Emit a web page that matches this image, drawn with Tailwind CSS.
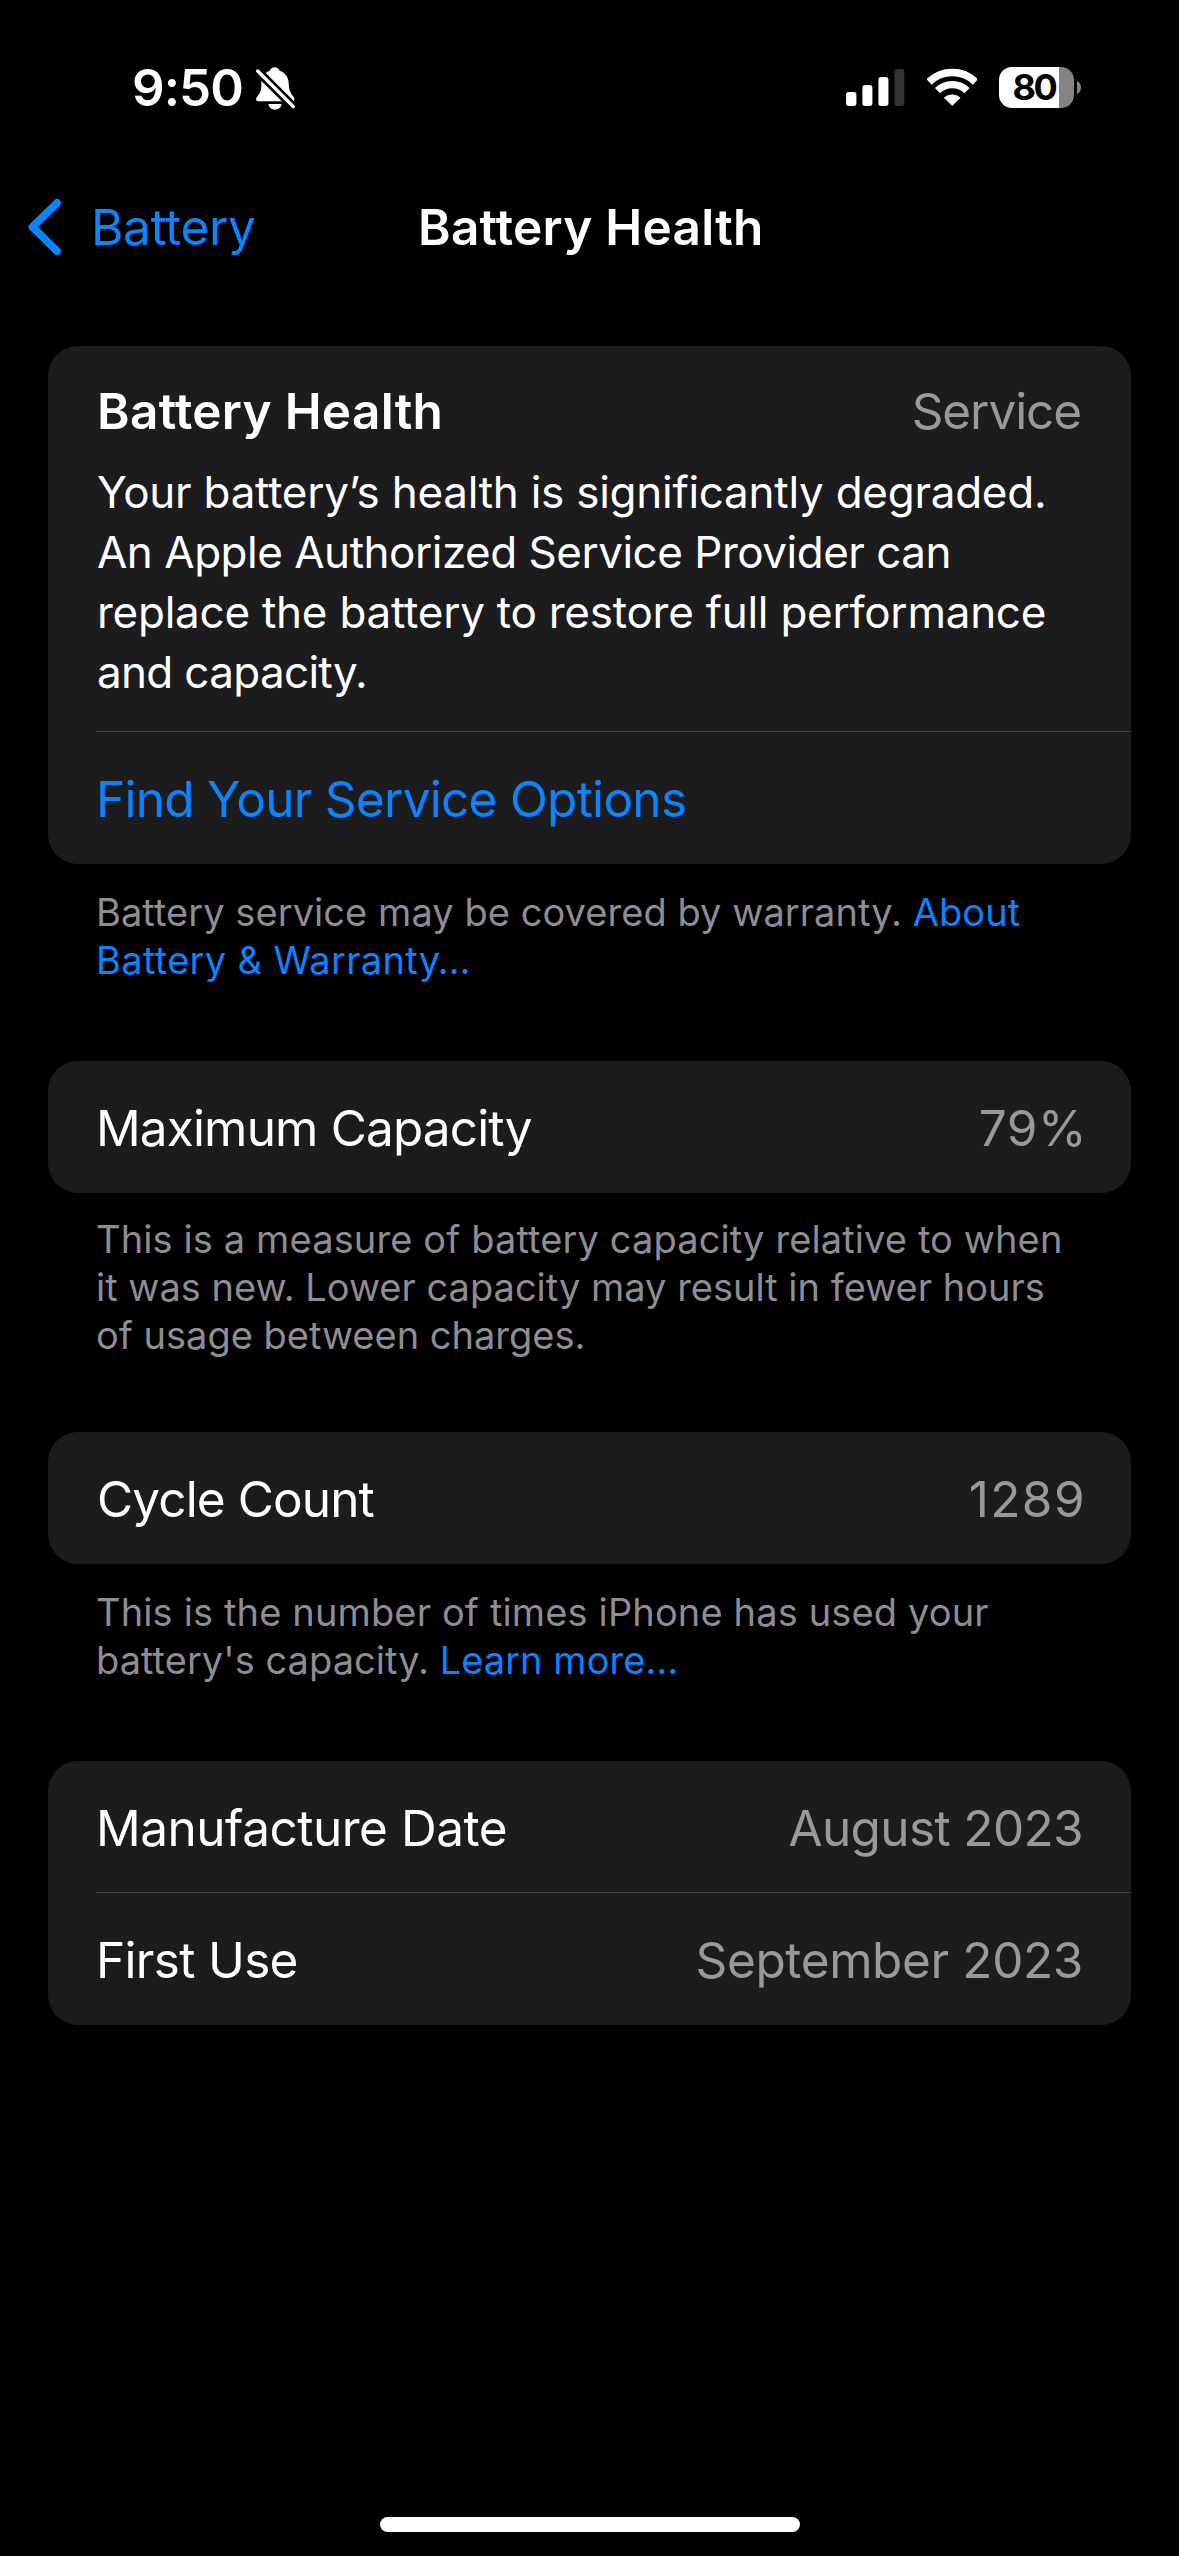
<!DOCTYPE html>
<html lang="en">
<head>
    <meta charset="UTF-8">
    <meta name="viewport" content="width=device-width, initial-scale=1.0">
    <title>Battery Health</title>
    <script src="https://cdn.jsdelivr.net/npm/@tailwindcss/browser@4"></script>
</head>
<body class="bg-black">
    <div class="w-[1179px] h-[2556px] flex flex-col overflow-hidden bg-black text-white font-['Inter',sans-serif] whitespace-nowrap">

        <!-- Status bar -->
        <div class="h-[161px] shrink-0 flex items-start justify-between pt-[67px] pl-[132px] pr-[98px]">
            <div class="flex items-start">
                <span class="w-[123px] text-[51px] leading-[42px] font-semibold tracking-[-0.9px]">9:50</span>
                <svg class="w-[41px] h-[43px]" viewBox="465 80 123 129" fill="none">
                    <path d="M524 81C531 81 537 85 539 91C556 97 565 110 566 127C567 149 571 157 579 167C583 172 584 176 583 179Q582 183 576 183H475Q468 183 468 177Q468 172 473 167C481 157 484 150 484 134C484 111 492 97 509 91C511 85 517 81 524 81Z" fill="white"/>
                    <path d="M505 191H545C543 202 535 208 525 208C515 208 507 202 505 191Z" fill="white"/>
                    <path d="M468 87L588 207" stroke="black" stroke-width="26"/>
                    <path d="M473 92L580 199" stroke="white" stroke-width="10" stroke-linecap="round"/>
                </svg>
            </div>
            <div class="flex items-start">
                <div class="flex items-start gap-[22px]">
                    <svg class="w-[58.5px] h-[41px]" viewBox="77 81 175 123">
                        <rect x="77" y="156" width="31" height="42" rx="8" fill="white"/>
                        <rect x="126" y="135" width="30" height="63" rx="8" fill="white"/>
                        <rect x="174" y="111" width="30" height="87" rx="8" fill="white"/>
                        <rect x="222" y="87" width="30" height="111" rx="8" fill="#333333"/>
                    </svg>
                    <svg class="w-[50.5px] h-[41px]" viewBox="319 81 152 123" fill="none">
                        <path d="M325.2 125.7A100.5 100.5 0 0 1 464.8 125.7" stroke="white" stroke-width="23"/>
                        <path d="M350.5 152A64 64 0 0 1 439.5 152" stroke="white" stroke-width="22"/>
                        <path d="M395 197L371 173.500A36 36 0 0 1 419 173.500Z" fill="white" stroke="white" stroke-width="2" stroke-linejoin="round"/>
                    </svg>
                    <div class="w-[75px] h-[41px] pl-[13.5px] rounded-[13px] bg-linear-to-r from-white from-80% to-[#848484] to-80% text-black text-[36px] leading-[41px] font-bold tracking-[-2.4px]">80</div>
                </div>
                <svg class="w-[7px] h-[41px]" viewBox="0 0 7 41">
                    <path d="M3 14C5.500 15 7 17.500 7 20.500S5.500 26 3 27Z" fill="#848484"/>
                </svg>
            </div>
        </div>

        <!-- Navigation bar -->
        <div class="h-[132px] shrink-0 grid grid-cols-[418px_1fr_418px] items-center text-[49.5px] leading-[60px]">
            <div class="flex items-center pl-[28px] text-[#0a84ff]">
                <svg class="w-[34px] h-[58px] mr-[29px]" viewBox="0 0 34 58" fill="none" stroke="currentColor" stroke-width="8" stroke-linecap="round" stroke-linejoin="round">
                    <path d="M29 5L4.500 29L29 53"/>
                </svg>
                <span class="tracking-[-0.36px]">Battery</span>
            </div>
            <h1 class="font-semibold tracking-[0.26px]">Battery Health</h1>
        </div>

        <main class="flex flex-col px-[48px] pt-[53px]">
            <!-- Battery health -->
            <section class="bg-[#1c1c1e] rounded-[30px]">
                <div class="h-[385px] pt-[35px] pl-[49px]">
                    <div class="flex justify-between pr-[50px] text-[49.5px] leading-[60px]">
                        <h2 class="font-semibold tracking-[0.3px]">Battery Health</h2>
                        <span class="text-[#98989f] tracking-[-1.09px]">Service</span>
                    </div>
                    <p class="mt-[21px] text-[44px] leading-[60px]">
                        <span class="tracking-[-0.26px]">Your battery’s health is significantly degraded.</span><br>
                        <span class="tracking-[-0.49px]">An Apple Authorized Service Provider can</span><br>
                        <span class="tracking-[-0.25px]">replace the battery to restore full performance</span><br>
                        <span class="tracking-[-0.68px]">and capacity.</span>
                    </p>
                </div>
                <div class="ml-[48px] h-px bg-[#414144]"></div>
                <div class="h-[132px] flex items-center pt-[2px] pl-[48px] text-[49.5px] text-[#0a84ff]">
                    <a class="tracking-[-0.72px]">Find Your Service Options</a>
                </div>
            </section>
            <p class="mt-[24px] pl-[48px] text-[38px] leading-[48px] text-[#8d8d93]">
                <span class="tracking-[0.06px]">Battery service may be covered by warranty. <a class="text-[#0a84ff]">About</a></span><br>
                <a class="text-[#0a84ff] tracking-[0.34px]">Battery &amp; Warranty…</a>
            </p>

            <!-- Maximum capacity -->
            <section class="mt-[77px] h-[132px] bg-[#1c1c1e] rounded-[30px] flex items-center justify-between pt-[2px] pl-[48px] pr-[44px] text-[49.5px]">
                <span class="tracking-[-0.85px]">Maximum Capacity</span>
                <span class="text-[#98989f] tracking-[0.5px]">79%</span>
            </section>
            <p class="mt-[22px] pl-[48px] text-[38px] leading-[48px] text-[#8d8d93]">
                <span class="tracking-[0.12px]">This is a measure of battery capacity relative to when</span><br>
                <span>it was new. Lower capacity may result in fewer hours</span><br>
                <span>of usage between charges.</span>
            </p>

            <!-- Cycle count -->
            <section class="mt-[73px] h-[132px] bg-[#1c1c1e] rounded-[30px] flex items-center justify-between pt-[2px] pl-[49px] pr-[45px] text-[49.5px]">
                <span class="tracking-[-0.88px]">Cycle Count</span>
                <span class="text-[#98989f] tracking-[1.4px]">1289</span>
            </section>
            <p class="mt-[24px] pl-[48px] text-[38px] leading-[48px] text-[#8d8d93]">
                <span class="tracking-[0.14px]">This is the number of times iPhone has used your</span><br>
                <span class="tracking-[0.04px]">battery's capacity. <a class="text-[#0a84ff]">Learn more…</a></span>
            </p>

            <!-- Dates -->
            <section class="mt-[77px] bg-[#1c1c1e] rounded-[30px] text-[49.5px]">
                <div class="h-[131px] flex items-center justify-between pt-[4px] pl-[48px] pr-[48px]">
                    <span class="tracking-[-0.48px]">Manufacture Date</span>
                    <span class="text-[#98989f] tracking-[-0.63px]">August 2023</span>
                </div>
                <div class="ml-[48px] h-px bg-[#414144]"></div>
                <div class="h-[132px] flex items-center justify-between pt-[2px] pl-[48px] pr-[48px]">
                    <span class="tracking-[-0.68px]">First Use</span>
                    <span class="text-[#98989f] tracking-[-0.38px]">September 2023</span>
                </div>
            </section>
        </main>

        <!-- Home indicator -->
        <div class="mt-auto mb-[24px] ml-[380px] w-[420px] h-[15px] shrink-0 rounded-full bg-white"></div>
    </div>
</body>
</html>
